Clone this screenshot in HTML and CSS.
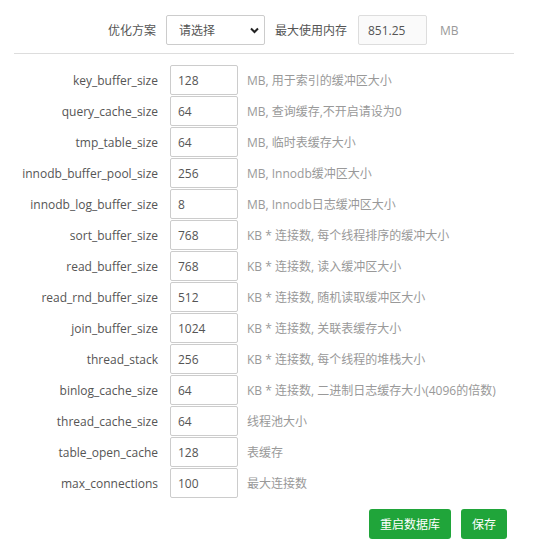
FILE: index.html
```html
<!DOCTYPE html>
<html lang="zh">
<head>
<meta charset="utf-8">
<link rel="stylesheet" href="styles.css">
</head>
<body>
<div class="panel">
  <div class="top">
    <span class="top-label l1">优化方案</span>
    <div class="select-wrap">
      <select class="select"><option>请选择</option></select>
      <svg class="chev" width="9" height="7" viewBox="0 0 9 7"><path d="M1 1.5 L4.5 5 L8 1.5" fill="none" stroke="#222" stroke-width="2"/></svg>
    </div>
    <span class="top-label l2">最大使用内存</span>
    <input class="mem" value="851.25" readonly>
    <span class="unit">MB</span>
  </div>
  <div class="sep"></div>
  <div class="rows">
    <div class="row"><span class="name">key_buffer_size</span><input class="val" value="128"><span class="help">MB, 用于索引的缓冲区大小</span></div>
    <div class="row"><span class="name">query_cache_size</span><input class="val" value="64"><span class="help">MB, 查询缓存,不开启请设为0</span></div>
    <div class="row"><span class="name">tmp_table_size</span><input class="val" value="64"><span class="help">MB, 临时表缓存大小</span></div>
    <div class="row"><span class="name">innodb_buffer_pool_size</span><input class="val" value="256"><span class="help">MB, Innodb缓冲区大小</span></div>
    <div class="row"><span class="name">innodb_log_buffer_size</span><input class="val" value="8"><span class="help">MB, Innodb日志缓冲区大小</span></div>
    <div class="row"><span class="name">sort_buffer_size</span><input class="val" value="768"><span class="help">KB * 连接数, 每个线程排序的缓冲大小</span></div>
    <div class="row"><span class="name">read_buffer_size</span><input class="val" value="768"><span class="help">KB * 连接数, 读入缓冲区大小</span></div>
    <div class="row"><span class="name">read_rnd_buffer_size</span><input class="val" value="512"><span class="help">KB * 连接数, 随机读取缓冲区大小</span></div>
    <div class="row"><span class="name">join_buffer_size</span><input class="val" value="1024"><span class="help">KB * 连接数, 关联表缓存大小</span></div>
    <div class="row"><span class="name">thread_stack</span><input class="val" value="256"><span class="help">KB * 连接数, 每个线程的堆栈大小</span></div>
    <div class="row"><span class="name">binlog_cache_size</span><input class="val" value="64"><span class="help">KB * 连接数, 二进制日志缓存大小(4096的倍数)</span></div>
    <div class="row"><span class="name">thread_cache_size</span><input class="val" value="64"><span class="help">线程池大小</span></div>
    <div class="row"><span class="name">table_open_cache</span><input class="val" value="128"><span class="help">表缓存</span></div>
    <div class="row"><span class="name">max_connections</span><input class="val" value="100"><span class="help">最大连接数</span></div>
  </div>
  <div class="actions">
    <button class="btn b1">重启数据库</button>
    <button class="btn b2">保存</button>
  </div>
</div>
</body>
</html>
```
FILE: styles.css
```css
html, body {
  margin: 0;
  padding: 0;
  background: #fff;
}
body {
  font-family: "Open Sans", "Noto Sans CJK SC", sans-serif;
  font-size: 12px;
  color: #555;
}
.panel {
  padding: 15px 0 0 0;
  width: 537px;
}
.top {
  display: flex;
  align-items: center;
  height: 30px;
  padding-left: 108px;
}
.top-label {
  color: #555;
  font-size: 12px;
}
.l1 { width: 58px; }
.select-wrap {
  position: relative;
  width: 99px;
  height: 30px;
}
.select {
  appearance: none;
  -webkit-appearance: none;
  width: 99px;
  height: 30px;
  border: 1px solid #ccc;
  border-radius: 2px;
  background: #fff;
  padding: 0 0 0 12px;
  font-family: inherit;
  font-size: 12px;
  color: #555;
  box-sizing: border-box;
  outline: none;
}
.chev {
  position: absolute;
  right: 6px;
  top: 12px;
}
.l2 {
  margin-left: 10px;
  width: 83px;
}
.mem {
  width: 69px;
  height: 30px;
  box-sizing: border-box;
  border: 1px solid #ddd;
  border-radius: 2px;
  background: #fafafa;
  padding: 0 0 0 9px;
  font-family: inherit;
  font-size: 12px;
  color: #555;
  outline: none;
}
.unit {
  margin-left: 13px;
  color: #999;
}
.sep {
  margin: 8px 23px 0 14px;
  height: 1px;
  background: #ddd;
}
.rows {
  padding-top: 11px;
  display: flex;
  flex-direction: column;
  gap: 1px;
}
.row {
  display: flex;
  align-items: center;
  height: 30px;
}
.name {
  width: 158px;
  text-align: right;
  color: #555;
  margin-right: 12px;
}
.val {
  width: 68px;
  height: 30px;
  box-sizing: border-box;
  border: 1px solid #ccc;
  border-radius: 2px;
  padding: 0 0 0 7px;
  font-family: inherit;
  font-size: 12px;
  color: #555;
  outline: none;
}
.help {
  margin-left: 9px;
  color: #999;
}
.actions {
  display: flex;
  justify-content: flex-end;
  gap: 10px;
  padding: 11px 30px 0 0;
}
.btn {
  height: 30px;
  border: none;
  border-radius: 3px;
  background: #20a53a;
  color: #fff;
  font-family: inherit;
  font-size: 12px;
  padding: 0 10px;
  cursor: pointer;
}
.b1 { width: 82px; }
.b2 { width: 46px; }
```
